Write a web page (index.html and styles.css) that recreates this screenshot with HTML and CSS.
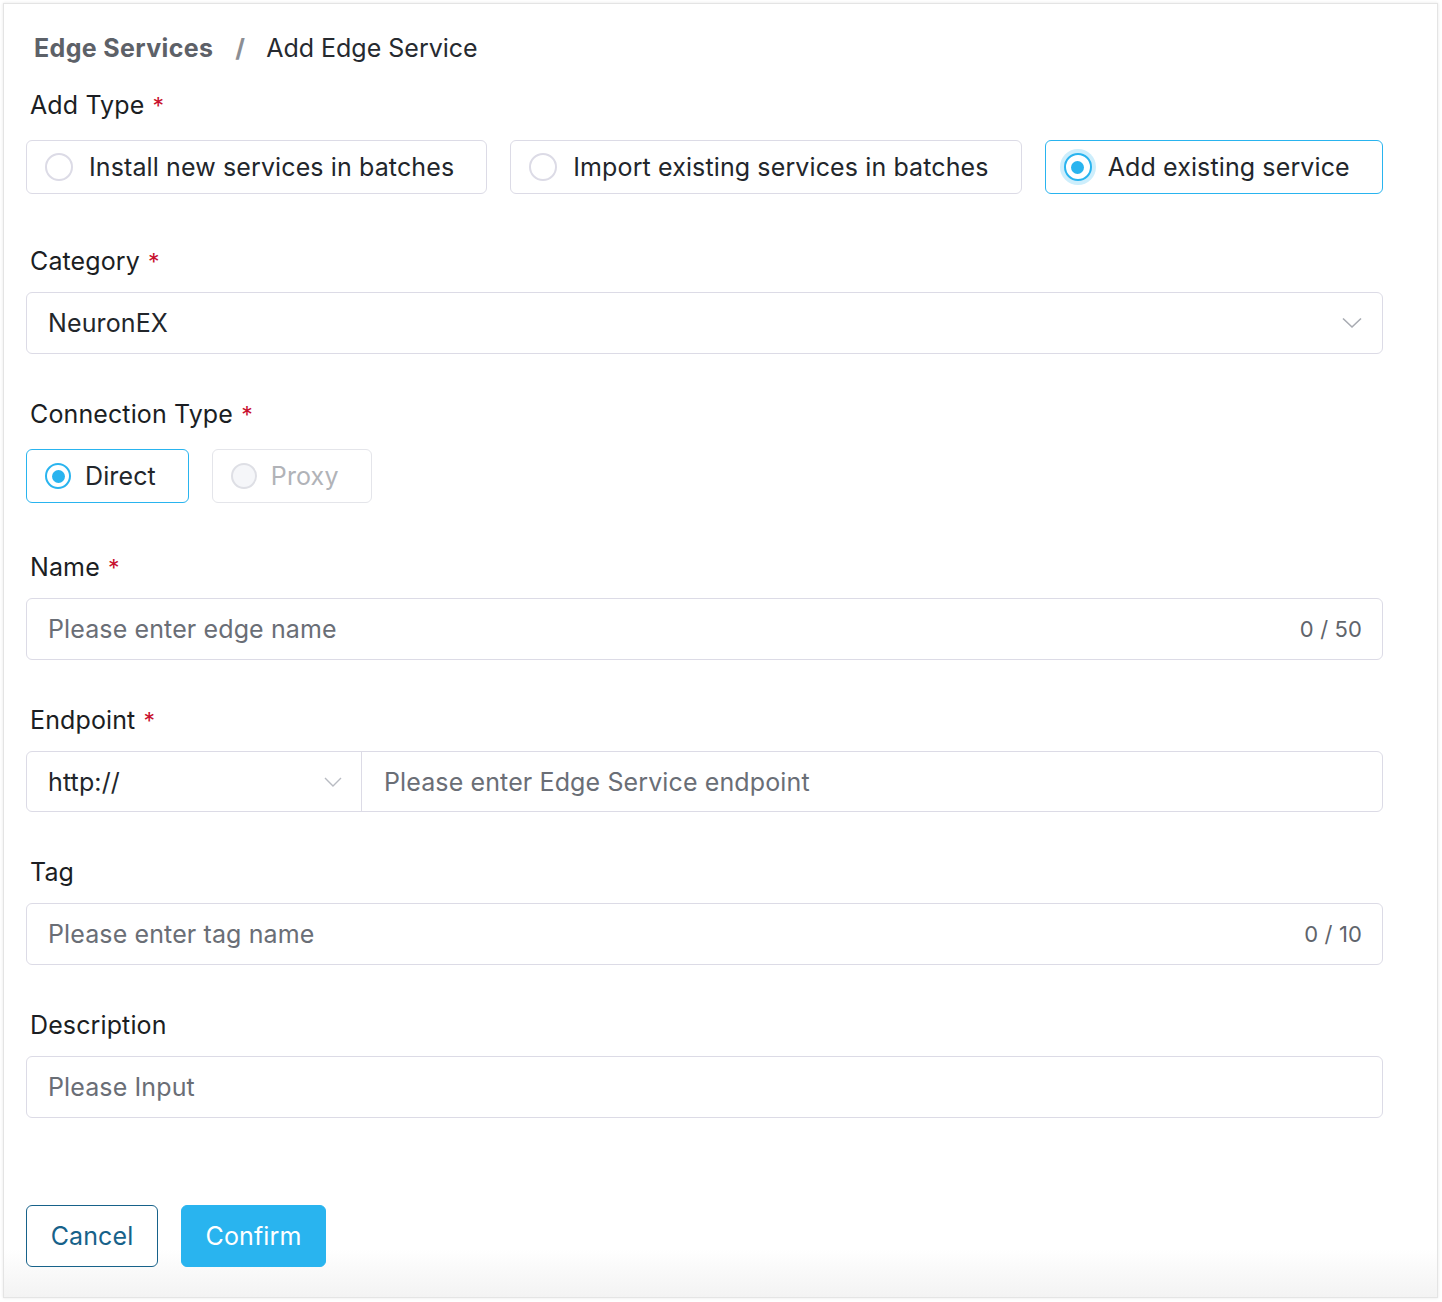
FILE: index.html
```html
<!DOCTYPE html>
<html lang="en">
<head>
<meta charset="utf-8">
<title>Add Edge Service</title>
<link rel="stylesheet" href="styles.css">
</head>
<body>
<div class="card">
  <div class="breadcrumb">
    <span class="crumb-link">Edge Services</span>
    <span class="crumb-sep">/</span>
    <span class="crumb-current">Add Edge Service</span>
  </div>

  <div class="item item-first item-radio">
    <div class="label">Add Type <span class="req">*</span></div>
    <div class="radio-group">
      <label class="radio-box"><span class="dot"></span><span class="rtext">Install new services in batches</span></label>
      <label class="radio-box"><span class="dot"></span><span class="rtext">Import existing services in batches</span></label>
      <label class="radio-box checked focus"><span class="dot"></span><span class="rtext">Add existing service</span></label>
    </div>
  </div>

  <div class="item after-radio">
    <div class="label">Category <span class="req">*</span></div>
    <div class="input select">
      <span class="value">NeuronEX</span>
      <svg class="chev" width="20" height="12" viewBox="0 0 20 12"><path d="M1 1.5 L10 10 L19 1.5" fill="none" stroke="#a8abb2" stroke-width="1.6"/></svg>
    </div>
  </div>

  <div class="item item-radio">
    <div class="label">Connection Type <span class="req">*</span></div>
    <div class="radio-group">
      <label class="radio-box small checked"><span class="dot"></span><span class="rtext">Direct</span></label>
      <label class="radio-box small disabled"><span class="dot"></span><span class="rtext">Proxy</span></label>
    </div>
  </div>

  <div class="item after-radio2">
    <div class="label">Name <span class="req">*</span></div>
    <div class="input">
      <span class="ph">Please enter edge name</span>
      <span class="count">0 / 50</span>
    </div>
  </div>

  <div class="item">
    <div class="label">Endpoint <span class="req">*</span></div>
    <div class="input group">
      <div class="prefix">
        <span class="value">http://</span>
        <svg class="chev small" width="18" height="10" viewBox="0 0 18 10"><path d="M1 1 L9 9 L17 1" fill="none" stroke="#b8bbc2" stroke-width="1.4"/></svg>
      </div>
      <div class="main"><span class="ph">Please enter Edge Service endpoint</span></div>
    </div>
  </div>

  <div class="item">
    <div class="label">Tag</div>
    <div class="input">
      <span class="ph">Please enter tag name</span>
      <span class="count">0 / 10</span>
    </div>
  </div>

  <div class="item">
    <div class="label">Description</div>
    <div class="input">
      <span class="ph">Please Input</span>
    </div>
  </div>

  <div class="actions">
    <button class="btn btn-cancel">Cancel</button>
    <button class="btn btn-confirm">Confirm</button>
  </div>
</div>
</body>
</html>
```

FILE: styles.css
```css
* { box-sizing: border-box; }
html, body { margin: 0; padding: 0; background: #ffffff; }
body {
  padding: 3px 4px 4px 3px;
  font-family: "Inter", "Noto Sans", sans-serif;
  font-size: 25px;
  letter-spacing: 0.12px;
  color: #1f2329;
}
.card {
  height: 1295px;
  border: 1px solid #e4e4e4;
  box-shadow: 0 0 3px rgba(0,0,0,0.10);
  background: linear-gradient(to bottom, #ffffff 0, #ffffff 1245px, #f3f3f3 100%);
  padding: 28px 54px 0 22px;
}
.breadcrumb {
  height: 32px;
  line-height: 32px;
  padding-left: 8px;
  display: flex;
  align-items: center;
  white-space: nowrap;
}
.crumb-link { font-weight: 700; color: #5d6168; letter-spacing: 0.35px; }
.crumb-sep { font-weight: 700; color: #8b8e94; margin: 0 21px 0 22px; }
.crumb-current { color: #262a30; letter-spacing: 0; }

.item { margin-top: 44px; }
.item-first { margin-top: 25px; }
.after-radio { margin-top: 51px; }
.after-radio2 { margin-top: 48px; }

.label {
  height: 32px;
  line-height: 32px;
  padding-left: 4px;
  color: #1b1e23;
  margin-bottom: 15px;
}
.item-radio .label { margin-bottom: 19px; }
.req { color: #c8102e; margin-left: 1px; font-size: 23px; }

.radio-group { display: flex; gap: 23px; }
.radio-box {
  display: flex;
  flex: none;
  align-items: center;
  white-space: nowrap;
  height: 54px;
  border: 1px solid #dcdbe6;
  border-radius: 6px;
  padding: 0 32px 0 18px;
  color: #22262b;
}
.radio-box .dot {
  width: 28px; height: 28px;
  border-radius: 50%;
  border: 2px solid #dcdbe6;
  background: #fff;
  margin-right: 16px;
  flex: none;
  position: relative;
}
.radio-box.checked { border-color: #29b4ef; }
.radio-box.checked .dot { border-color: #29b4ef; }
.radio-box.checked .dot::after {
  content: "";
  position: absolute;
  left: 50%; top: 50%;
  width: 13px; height: 13px;
  margin: -6.5px 0 0 -6.5px;
  border-radius: 50%;
  background: #29b4ef;
}
.radio-box.focus .dot { box-shadow: 0 0 0 4px #cdeefc; }
.radio-box.small .dot { width: 26px; height: 26px; margin-right: 14px; }
.radio-box.disabled { color: #b1b3b8; border-color: #e4e5ea; }
.radio-box.disabled .dot { background: #f5f6f9; border-color: #dedfe5; }

.input {
  height: 62px;
  border: 1px solid #dcdbe6;
  border-radius: 6px;
  display: flex;
  align-items: center;
  padding: 0 20px 0 21px;
  color: #22262b;
  white-space: nowrap;
}
.ph { color: #6a6e76; flex: 1; }
.count { color: #60646b; font-size: 22px; }
.select .value { flex: 1; }
.chev { flex: none; }

.input.group { padding: 0; height: 61px; }
.prefix {
  width: 335px;
  height: 100%;
  display: flex;
  align-items: center;
  padding: 0 19px 0 21px;
  border-right: 1px solid #dcdbe6;
}
.prefix .value { flex: 1; }
.main { flex: 1; padding-left: 22px; display: flex; align-items: center; }

.actions {
  margin-top: 87px;
  display: flex;
  gap: 23px;
}
.btn {
  height: 62px;
  border-radius: 6px;
  font-family: inherit;
  font-size: 25px;
  letter-spacing: 0.12px;
  padding: 0;
  cursor: pointer;
}
.btn-cancel {
  background: #fff;
  border: 1px solid #17628a;
  color: #17628a;
  width: 132px;
}
.btn-confirm {
  background: #29b4ef;
  border: 1px solid #29b4ef;
  color: #fff;
  width: 145px;
}
```
